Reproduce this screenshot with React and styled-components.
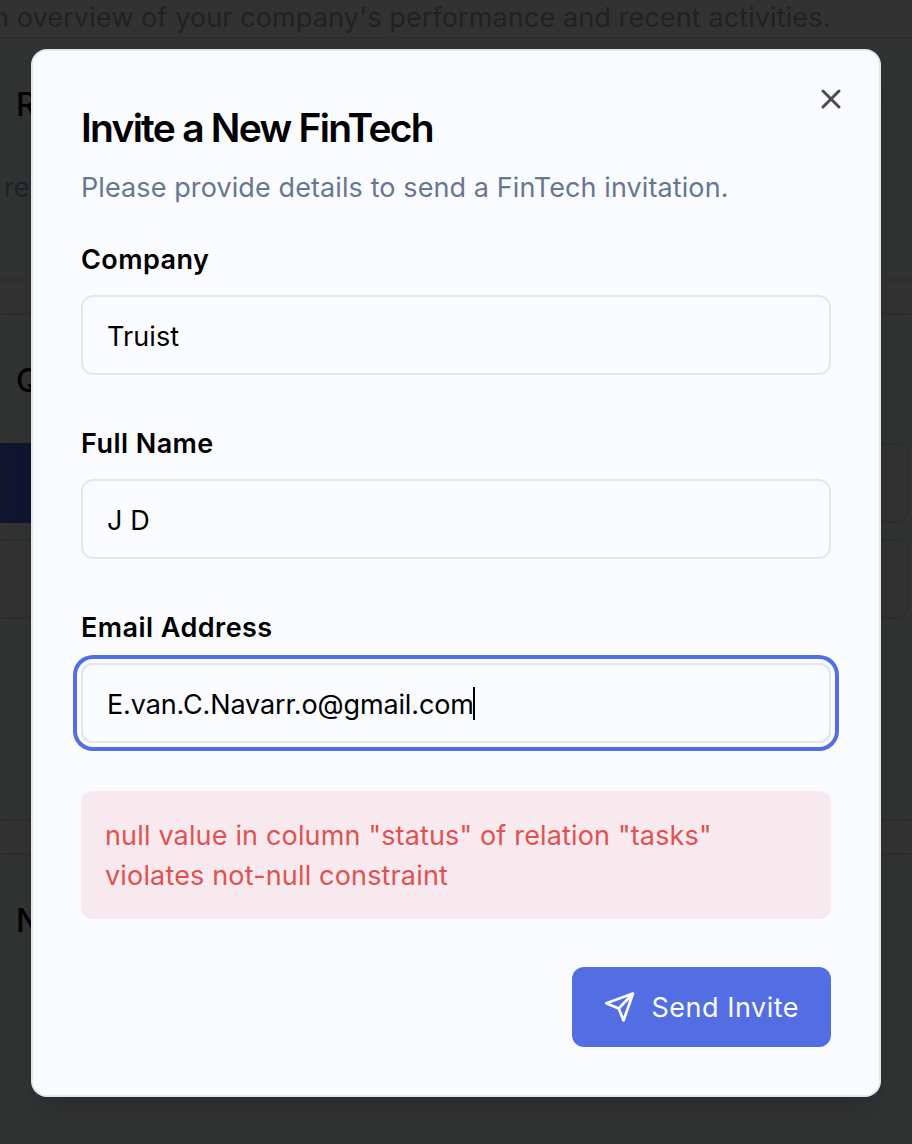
import React from 'react';
import styled, { createGlobalStyle, css } from 'styled-components';
import { X } from 'lucide-react';

const Global = createGlobalStyle`
  *, *::before, *::after { box-sizing: border-box; }
  body { margin: 0; background: #333232; font-family: Inter, sans-serif; overflow: hidden; }
  button, input, h1, h2, p { margin: 0; font-family: inherit; }
`;

const Stage = styled.div`
  position: relative;
  width: 912px;
  height: 1144px;
  overflow: hidden;
`;

const Page = styled.div`
  display: flex;
  flex-direction: column;
  gap: 32px;
  height: 100%;
  color: #1f2226;
  font-size: 27px;
`;

const PageIntro = styled.p`
  flex: none;
  height: 37px;
  margin-bottom: -32px;
  margin-left: -7px;
  line-height: 36px;
  white-space: nowrap;
  letter-spacing: 0.11px;
`;

const Panel = styled.section`
  flex: none;
  height: ${(p) => p.$height}px;
  padding-top: 46px;
  border: solid #2d2f2f;
  border-width: 2px 0;
  background: #313332;
`;

const PanelTitle = styled.h2`
  padding-left: 16px;
  font-size: 32px;
  font-weight: 500;
  line-height: 40px;
  color: #000;
`;

const PanelText = styled.p`
  padding: 43px 0 0 4px;
  line-height: 40px;
`;

const ActionGrid = styled.div`
  display: grid;
  grid-template-columns: 1fr 1fr;
  gap: 16px;
  margin: 42px 3px 0 -20px;
`;

const Action = styled.div`
  height: 80px;
  border: 2px solid ${(p) => (p.$primary ? '#11152f' : '#2d2f2f')};
  border-radius: 12px;
  background: ${(p) => (p.$primary ? '#11152f' : '#333232')};
`;

const Dialog = styled.div`
  position: absolute;
  top: 49px;
  left: 31px;
  width: 850px;
  height: 1048px;
  padding: 57px 48px 48px;
  border: 2px solid #e2e8f0;
  border-radius: 16px;
  background: #fafbff;
  box-shadow: 0 20px 30px -6px rgba(0, 0, 0, 0.1), 0 8px 12px -8px rgba(0, 0, 0, 0.1);
  color: #000;
`;

const Close = styled.button`
  position: absolute;
  top: 32px;
  right: 32px;
  display: flex;
  padding: 0;
  border: 0;
  background: none;
  color: #4b4c4d;
`;

const Title = styled.h1`
  font-size: 39px;
  font-weight: 600;
  line-height: 40px;
  letter-spacing: -1.75px;
`;

const Description = styled.p`
  margin-top: 20px;
  font-size: 27px;
  line-height: 40px;
  letter-spacing: 0.1px;
  color: #68768f;
  white-space: nowrap;
`;

const Form = styled.form`
  display: flex;
  flex-direction: column;
  gap: 48px;
  margin-top: 38px;
`;

const FieldGroup = styled.div`
  display: flex;
  flex-direction: column;
  gap: 55px;
`;

const Field = styled.div`
  display: flex;
  flex-direction: column;
  gap: 21px;
`;

const Label = styled.label`
  font-size: 27px;
  font-weight: 600;
  line-height: 28px;
  letter-spacing: 0.45px;
`;

const focused = css`
  box-shadow: 0 0 0 4px #fafbff, 0 0 0 8px #536ee3;
`;

const Control = styled.div`
  display: flex;
  align-items: center;
  height: 80px;
  padding: 2px 24px 0;
  border: 2px solid #e2e8ee;
  border-radius: 12px;
  font-size: 27px;
  letter-spacing: 0.1px;
  ${(p) => p.$focused && focused}
`;

const Email = styled.span`
  letter-spacing: -0.13px;
`;

const Caret = styled.span`
  width: 2px;
  height: 33px;
  margin: -1px 0 0 -1px;
  background: #000;
`;

const ErrorBox = styled.div`
  padding: 25px 24px 23px;
  border-radius: 12px;
  background: #f8e9ee;
  color: #e05252;
  font-size: 27px;
  line-height: 40px;
  letter-spacing: 0.16px;
`;

const Submit = styled.button`
  align-self: flex-end;
  display: flex;
  align-items: center;
  gap: 16px;
  width: 259px;
  height: 80px;
  padding: 0 32px;
  border: 0;
  border-radius: 12px;
  background: #536ee3;
  color: #fafbff;
  font-size: 27px;
  font-weight: 400;
  letter-spacing: 0.5px;
  white-space: nowrap;
`;

const fields = [
  { label: 'Company', value: 'Truist' },
  { label: 'Full Name', value: 'J D' },
  { label: 'Email Address', value: 'E.van.C.Navarr.o@gmail.com', focused: true },
];

const SendIcon = () => (
  <svg width="32" height="32" viewBox="0 0 15 15" fill="none">
    <path
      d="M13.8 1.1 9.3 13.9 7 8.2 1.1 5.7 13.8 1.1ZM7 8.2 13.8 1.1"
      stroke="currentColor"
      strokeWidth="1.3"
      strokeLinejoin="round"
    />
  </svg>
);

export default function App() {
  return (
    <Stage>
      <Global />
      <Page>
        <PageIntro>n overview of your company's performance and recent activities.</PageIntro>
        <Panel $height={244}>
          <PanelTitle>R</PanelTitle>
          <PanelText>re</PanelText>
        </Panel>
        <Panel $height={508}>
          <PanelTitle>Q</PanelTitle>
          <ActionGrid>
            <Action $primary />
            <Action />
            <Action />
            <Action />
          </ActionGrid>
        </Panel>
        <Panel $height={300}>
          <PanelTitle>N</PanelTitle>
        </Panel>
      </Page>
      <Dialog role="dialog" aria-label="Invite a New FinTech">
        <Close aria-label="Close">
          <X size={32} strokeWidth={2.25} />
        </Close>
        <Title>Invite a New FinTech</Title>
        <Description>Please provide details to send a FinTech invitation.</Description>
        <Form>
          <FieldGroup>
            {fields.map((f) => (
              <Field key={f.label}>
                <Label>{f.label}</Label>
                <Control $focused={f.focused}>
                  {f.focused ? <Email>{f.value}</Email> : f.value}
                  {f.focused && <Caret />}
                </Control>
              </Field>
            ))}
          </FieldGroup>
          <ErrorBox>null value in column "status" of relation "tasks" violates not-null constraint</ErrorBox>
          <Submit type="button">
            <SendIcon />
            Send Invite
          </Submit>
        </Form>
      </Dialog>
    </Stage>
  );
}
